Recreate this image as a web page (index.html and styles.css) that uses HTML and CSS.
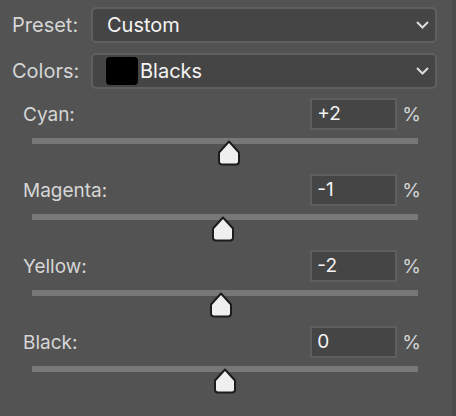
FILE: index.html
```html
<!DOCTYPE html>
<html lang="en">

<head>
    <meta charset="UTF-8">
    <meta name="viewport" content="width=device-width, initial-scale=1.0">
    <title>Selective Color</title>
    <link rel="stylesheet" href="styles.css">
</head>

<body>
    <div class="panel">
        <div class="selects">
            <span class="field-label">Preset:</span>
            <div class="dropdown">
                <span class="dropdown-text">Custom</span>
                <svg class="chevron" width="13" height="8" viewBox="0 0 13 8">
                    <polyline points="1,1 6.5,6.5 12,1" />
                </svg>
            </div>

            <span class="field-label">Colors:</span>
            <div class="dropdown">
                <span class="swatch"></span>
                <span class="dropdown-text">Blacks</span>
                <svg class="chevron" width="13" height="8" viewBox="0 0 13 8">
                    <polyline points="1,1 6.5,6.5 12,1" />
                </svg>
            </div>
        </div>

        <div class="sliders">
            <div class="slider">
                <div class="slider-head">
                    <span class="slider-label">Cyan:</span>
                    <div class="value-box">+2</div>
                    <span class="unit">%</span>
                </div>
                <div class="track">
                    <svg class="thumb" style="left: 51%;" width="24" height="26" viewBox="0 0 24 26">
                        <path d="M12 1.5 L22 12.5 V21.5 Q22 24.5 19 24.5 H5 Q2 24.5 2 21.5 V12.5 Z" />
                    </svg>
                </div>
            </div>

            <div class="slider">
                <div class="slider-head">
                    <span class="slider-label">Magenta:</span>
                    <div class="value-box">-1</div>
                    <span class="unit">%</span>
                </div>
                <div class="track">
                    <svg class="thumb" style="left: 49.5%;" width="24" height="26" viewBox="0 0 24 26">
                        <path d="M12 1.5 L22 12.5 V21.5 Q22 24.5 19 24.5 H5 Q2 24.5 2 21.5 V12.5 Z" />
                    </svg>
                </div>
            </div>

            <div class="slider">
                <div class="slider-head">
                    <span class="slider-label">Yellow:</span>
                    <div class="value-box">-2</div>
                    <span class="unit">%</span>
                </div>
                <div class="track">
                    <svg class="thumb" style="left: 49%;" width="24" height="26" viewBox="0 0 24 26">
                        <path d="M12 1.5 L22 12.5 V21.5 Q22 24.5 19 24.5 H5 Q2 24.5 2 21.5 V12.5 Z" />
                    </svg>
                </div>
            </div>

            <div class="slider">
                <div class="slider-head">
                    <span class="slider-label">Black:</span>
                    <div class="value-box">0</div>
                    <span class="unit">%</span>
                </div>
                <div class="track">
                    <svg class="thumb" style="left: 50%;" width="24" height="26" viewBox="0 0 24 26">
                        <path d="M12 1.5 L22 12.5 V21.5 Q22 24.5 19 24.5 H5 Q2 24.5 2 21.5 V12.5 Z" />
                    </svg>
                </div>
            </div>
        </div>
    </div>
</body>

</html>
```

FILE: styles.css
```css
:root {
    --bg: #535353;
    --field: #454545;
    --field-border: #5f5f5f;
    --label: #d6d6d6;
    --text: #f4f4f4;
    --track: #787878;
}

* {
    box-sizing: border-box;
}

body {
    margin: 0;
    width: 456px;
    height: 416px;
    background: var(--bg);
    border-right: 4px solid #4b4b4b;
    font-family: Inter, "Noto Sans", sans-serif;
    color: var(--text);
    overflow: hidden;
}

.panel {
    padding: 7px 15px 0 12px;
}

.selects {
    display: grid;
    grid-template-columns: 79px 1fr;
    row-gap: 10px;
    align-items: center;
}

.field-label {
    font-size: 20px;
    color: var(--label);
}

.dropdown {
    display: flex;
    align-items: center;
    height: 36px;
    padding: 0 6px 0 13px;
    background: var(--field);
    border: 2px solid var(--field-border);
    border-radius: 5px;
    font-size: 20px;
}

.dropdown-text {
    flex: 1;
    padding-left: 1px;
}

.swatch {
    width: 32px;
    height: 28px;
    margin-right: 1px;
    background: #000;
    border-radius: 4px;
}

.chevron polyline {
    fill: none;
    stroke: #dcdcdc;
    stroke-width: 2;
}

.sliders {
    margin-top: 9px;
}

.slider-head {
    display: flex;
    align-items: center;
    height: 32px;
    padding: 0 16px 0 11px;
}

.slider-label {
    flex: 1;
    font-size: 19px;
    color: var(--label);
}

.value-box {
    width: 87px;
    height: 32px;
    padding-left: 5px;
    line-height: 28px;
    font-size: 19px;
    background: var(--field);
    border: 2px solid var(--field-border);
}

.unit {
    margin-left: 5px;
    font-size: 19px;
    color: var(--label);
}

.track {
    position: relative;
    height: 6px;
    margin: 8px 19px 30px 20px;
    background: var(--track);
}

.thumb {
    position: absolute;
    top: 2px;
    transform: translateX(-50%);
}

.thumb path {
    fill: #efefef;
    stroke: #1c1c1c;
    stroke-width: 2;
    stroke-linejoin: round;
}
```
